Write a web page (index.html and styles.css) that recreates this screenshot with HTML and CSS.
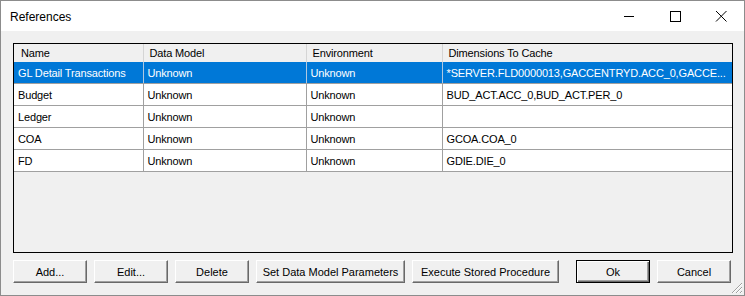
FILE: index.html
```html
<!DOCTYPE html>
<html lang="en">
<head>
  <meta charset="UTF-8">
  <title>References</title>
  <link rel="stylesheet" href="styles.css">
</head>
<body>
  <div class="window">
    <div class="titlebar">
      <span class="title">References</span>
      <div class="controls">
        <span class="ctl">
          <svg width="12" height="12" viewBox="0 0 12 12"><path d="M1 6.5h10" stroke="#000" stroke-width="1"/></svg>
        </span>
        <span class="ctl">
          <svg width="12" height="12" viewBox="0 0 12 12"><rect x="1.5" y="1.5" width="10" height="10" fill="none" stroke="#000" stroke-width="1"/></svg>
        </span>
        <span class="ctl">
          <svg width="12" height="12" viewBox="0 0 12 12"><path d="M1 1L11.5 11.5M11.5 1L1 11.5" stroke="#000" stroke-width="1"/></svg>
        </span>
      </div>
    </div>

    <div class="client">
      <div class="listview">
        <table class="grid">
          <colgroup>
            <col class="c-name">
            <col class="c-model">
            <col class="c-env">
            <col>
          </colgroup>
          <thead>
            <tr>
              <th class="first">Name</th>
              <th>Data Model</th>
              <th>Environment</th>
              <th>Dimensions To Cache</th>
            </tr>
          </thead>
          <tbody>
            <tr class="selected">
              <td>GL Detail Transactions</td>
              <td>Unknown</td>
              <td>Unknown</td>
              <td>*SERVER.FLD0000013,GACCENTRYD.ACC_0,GACCE...</td>
            </tr>
            <tr>
              <td>Budget</td>
              <td>Unknown</td>
              <td>Unknown</td>
              <td>BUD_ACT.ACC_0,BUD_ACT.PER_0</td>
            </tr>
            <tr>
              <td>Ledger</td>
              <td>Unknown</td>
              <td>Unknown</td>
              <td></td>
            </tr>
            <tr>
              <td>COA</td>
              <td>Unknown</td>
              <td>Unknown</td>
              <td>GCOA.COA_0</td>
            </tr>
            <tr>
              <td>FD</td>
              <td>Unknown</td>
              <td>Unknown</td>
              <td>GDIE.DIE_0</td>
            </tr>
          </tbody>
        </table>
      </div>

      <div class="buttons">
        <button class="btn w74">Add...</button>
        <button class="btn w74">Edit...</button>
        <button class="btn w74">Delete</button>
        <button class="btn w149">Set Data Model Parameters</button>
        <button class="btn w147">Execute Stored Procedure</button>
        <button class="btn w74 default">Ok</button>
        <button class="btn w74 last">Cancel</button>
      </div>
    </div>

    <svg class="grip" width="12" height="12" viewBox="0 0 12 12">
      <path d="M11 1L1 11M11 5L5 11M11 9L9 11" stroke="#a0a0a0" stroke-width="1"/>
      <path d="M11 2L2 11M11 6L6 11M11 10L10 11" stroke="#fff" stroke-width="1"/>
    </svg>
  </div>
</body>
</html>
```

FILE: styles.css
```css
body {
  margin: 0;
  font-family: "Liberation Sans", Arial, sans-serif;
  background: #fff;
}

.window {
  position: relative;
  width: 745px;
  height: 296px;
  box-sizing: border-box;
  border: 1px solid #8c8c8c;
  background: #f0f0f0;
  display: flex;
  flex-direction: column;
}

.titlebar {
  height: 30px;
  background: #fff;
  display: flex;
  align-items: center;
  padding-left: 9px;
}

.title {
  font-size: 12px;
  color: #000;
  flex: 1;
  margin-top: 1px;
}

.controls {
  display: flex;
  height: 100%;
}

.ctl {
  width: 46px;
  display: flex;
  align-items: center;
  justify-content: center;
}

.client {
  padding: 12px 11px 0 12px;
}

.listview {
  width: 720px;
  height: 210px;
  box-sizing: border-box;
  border: 1px solid #000;
  background: #f0f0f0;
  overflow: hidden;
}

.grid {
  width: 718px;
  border-collapse: collapse;
  table-layout: fixed;
  font-size: 11px;
  letter-spacing: -0.15px;
}

.c-name { width: 129px; }
.c-model { width: 163px; }
.c-env { width: 136px; }

.grid th {
  height: 18px;
  padding: 0 0 0 6px;
  text-align: left;
  font-weight: normal;
  background: #f0f0f0;
  border-right: 1px solid #d5d5d5;
  white-space: nowrap;
}

.grid th.first {
  padding-left: 7px;
}

.grid th:last-child {
  border-right: none;
}

.grid td {
  height: 21px;
  padding: 0 0 0 4px;
  background: #fff;
  border-right: 1px solid #a0a0a0;
  border-bottom: 1px solid #a0a0a0;
  white-space: nowrap;
  overflow: hidden;
}

.grid td:last-child {
  border-right: none;
}

.grid tr.selected td {
  background: #0078d7;
  color: #fff;
  border-right-color: #b0c8e0;
}

.grid tr.selected td:last-child {
  border-right: none;
}

.buttons {
  display: flex;
  margin-top: 7px;
}

.btn {
  flex: 0 0 auto;
  height: 23px;
  box-sizing: border-box;
  margin: 0 7px 0 0;
  padding: 0;
  font-family: "Liberation Sans", Arial, sans-serif;
  font-size: 11px;
  color: #000;
  background: #f0f0f0;
  border: 1px solid;
  border-color: #fff #696969 #696969 #fff;
  box-shadow: inset -1px -1px 0 #a0a0a0;
}

.w74 { width: 74px; }
.w149 { width: 149px; }
.w147 { width: 147px; margin-right: 17px; }
.btn.last { margin-right: 0; }

.btn.default {
  border: 1px solid #000;
  box-shadow: inset 1px 1px 0 #fff, inset -1px -1px 0 #696969, inset -2px -2px 0 #a0a0a0;
}

.grip {
  position: absolute;
  right: 1px;
  bottom: 1px;
}
```
